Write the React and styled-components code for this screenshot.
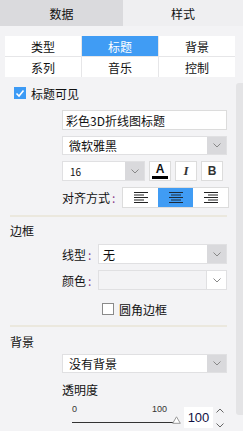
import styled, { createGlobalStyle } from "styled-components";

const GlobalStyle = createGlobalStyle`
  body {
    margin: 0;
    background: #f3f3f5;
    font-family: "Noto Sans CJK SC", "Noto Sans", sans-serif;
    font-size: 12px;
    color: #111;
  }
`;

const Panel = styled.div`
  width: 243px;
  height: 431px;
  overflow: hidden;
  display: flex;
  flex-direction: column;
`;

const MainTabs = styled.div`
  display: grid;
  grid-template-columns: 123px 120px;
  height: 26px;
`;

const MainTab = styled.div`
  display: flex;
  align-items: center;
  justify-content: center;
  background: ${(p) => (p.$active ? "#efeff1" : "#dadadd")};
`;

const Body = styled.div`
  flex: 1;
  display: flex;
`;

const Content = styled.div`
  width: 236px;
  display: flex;
  flex-direction: column;
`;

const ScrollTrack = styled.div`
  width: 7px;
  padding-top: 57px;
`;

const ScrollThumb = styled.div`
  height: 332px;
  background: #e4e4e6;
  border-radius: 3px 0 0 3px;
`;

const SubTabs = styled.div`
  margin: 10px 1px 0 5px;
  display: grid;
  grid-template-columns: repeat(3, 1fr);
  gap: 1px;
  background: #e6e6e8;
`;

const SubTab = styled.div`
  height: 20px;
  display: flex;
  align-items: center;
  justify-content: center;
  background: ${(p) => (p.$active ? "#409cf4" : "#fff")};
  color: ${(p) => (p.$active ? "#fff" : "#111")};
`;

const CheckRow = styled.label`
  display: flex;
  align-items: center;
  gap: 5px;
  height: 12px;
  margin-top: ${(p) => p.$top}px;
  padding-left: ${(p) => p.$left}px;
`;

const Box = styled.span`
  width: 12px;
  height: 12px;
  box-sizing: border-box;
  display: flex;
  align-items: center;
  justify-content: center;
  background: ${(p) => (p.$checked ? "#3d9bf5" : "#fff")};
  border: ${(p) => (p.$checked ? "none" : "1px solid #8a8a8a")};
`;

const Form = styled.div`
  padding: 0 9px 0 62px;
  display: flex;
  flex-direction: column;
`;

const TextInput = styled.div`
  margin-top: 11px;
  height: 20px;
  box-sizing: border-box;
  border: 1px solid #dcdcdc;
  background: #fff;
  padding-left: 3px;
  display: flex;
  align-items: center;
`;

const SelectBox = styled.div`
  margin-top: ${(p) => p.$top || 0}px;
  width: ${(p) => (p.$width ? p.$width + "px" : "auto")};
  flex: ${(p) => (p.$width ? "none" : "1")};
  height: ${(p) => p.$height || 20}px;
  box-sizing: border-box;
  border: 1px solid #e0e0e2;
  background: ${(p) => (p.$disabled ? "transparent" : "#fff")};
  display: flex;
`;

const SelectValue = styled.div`
  flex: 1;
  display: flex;
  align-items: center;
  padding-left: ${(p) => p.$pad || 6}px;
  font-size: ${(p) => p.$size || 12}px;
`;

const ArrowZone = styled.div`
  width: 19px;
  display: flex;
  align-items: center;
  justify-content: center;
  background: ${(p) => (p.$disabled ? "#fff" : "#d9d9dc")};
  border-left: ${(p) => (p.$disabled ? "1px solid #e0e0e2" : "none")};
`;

const Row = styled.div`
  margin-top: ${(p) => p.$top}px;
  display: flex;
  align-items: center;
`;

const StyleButton = styled.div`
  margin-left: 4px;
  width: 22px;
  height: 20px;
  box-sizing: border-box;
  border: 1px solid #dcdcdc;
  background: #fff;
  display: flex;
  flex-direction: column;
  align-items: center;
  justify-content: center;
`;

const ColorA = styled.span`
  font-family: "Liberation Sans", sans-serif;
  font-weight: bold;
  font-size: 12px;
  line-height: 10px;
`;

const ColorBar = styled.span`
  margin-top: 2px;
  width: 16px;
  height: 3px;
  background: #000;
`;

const ItalicI = styled.span`
  font-family: "Liberation Serif", serif;
  font-style: italic;
  font-weight: bold;
  font-size: 13px;
  color: #333;
`;

const BoldB = styled.span`
  font-family: "Liberation Sans", sans-serif;
  font-weight: 900;
  font-size: 12px;
  color: #333;
`;

const Label = styled.div`
  width: ${(p) => p.$width}px;
  flex: none;
`;

const Colon = styled.span`
  color: #8a3a8a;
  margin-left: 2px;
`;

const AlignGroup = styled.div`
  display: flex;
  height: 21px;
  box-sizing: border-box;
  border: 1px solid #dcdcdc;
  background: #fff;
`;

const AlignButton = styled.div`
  width: 35px;
  display: flex;
  align-items: center;
  justify-content: center;
  background: ${(p) => (p.$active ? "#409cf4" : "#fff")};
`;

const Divider = styled.div`
  margin: ${(p) => p.$top}px 9px 0 10px;
  height: 2px;
  background: #ebe8de;
`;

const Heading = styled.div`
  margin-top: ${(p) => p.$top}px;
  padding-left: 10px;
  line-height: 16px;
`;

const Caption = styled.div`
  margin-top: 9px;
  line-height: 16px;
`;

const SliderRow = styled.div`
  margin-top: 6px;
  display: flex;
  align-items: flex-start;
`;

const Slider = styled.div`
  position: relative;
  margin-left: 10px;
  width: 108px;
  height: 23px;
`;

const SliderLabels = styled.div`
  width: 95px;
  display: flex;
  justify-content: space-between;
  font-family: "Liberation Sans", sans-serif;
  font-size: 9px;
  color: #333;
  line-height: 10px;
`;

const SliderLine = styled.div`
  margin-top: 8px;
  width: 104px;
  height: 1px;
  background: #333;
`;

const SliderThumb = styled.svg`
  position: absolute;
  left: 100px;
  top: 12px;
`;

const NumberBox = styled.div`
  margin-left: 4px;
  margin-top: 3px;
  width: 29px;
  height: 21px;
  box-sizing: border-box;
  background: #fff;
  display: flex;
  align-items: center;
  justify-content: center;
  font-family: "Liberation Sans", sans-serif;
  font-size: 13px;
  color: #111144;
`;

const Spinner = styled.div`
  margin-left: 2px;
  margin-top: 4px;
  width: 10px;
  height: 20px;
  display: flex;
  flex-direction: column;
  justify-content: space-between;
  align-items: center;
`;

const Chevron = ({ up, color = "#888" }) => (
  <svg width="8" height="5" viewBox="0 0 8 5">
    <path
      d={up ? "M0.5 4.5 L4 1 L7.5 4.5" : "M0.5 0.5 L4 4 L7.5 0.5"}
      fill="none"
      stroke={color}
      strokeWidth="1"
    />
  </svg>
);

const Select = ({ value, top, width, height, size, pad, disabled }) => (
  <SelectBox $top={top} $width={width} $height={height} $disabled={disabled}>
    <SelectValue $size={size} $pad={pad}>
      {value}
    </SelectValue>
    <ArrowZone $disabled={disabled}>
      <Chevron />
    </ArrowZone>
  </SelectBox>
);

const AlignIcon = ({ mode }) => {
  const shortX = mode === "left" ? 0 : mode === "center" ? 2 : 4;
  return (
    <svg width="14" height="11" viewBox="0 0 14 11">
      {[0, 1, 2, 3, 4].map((i) => {
        const isShort = i % 2 === 1;
        return (
          <rect
            key={i}
            x={isShort ? shortX : 0}
            y={i * 2.5}
            width={isShort ? 10 : 14}
            height="1"
            fill={mode === "center" ? "#1d2b3a" : "#222"}
          />
        );
      })}
    </svg>
  );
};

const subTabs = ["类型", "标题", "背景", "系列", "音乐", "控制"];

const App = () => {
  return (
    <>
      <GlobalStyle />
      <Panel>
        <MainTabs>
          <MainTab>数据</MainTab>
          <MainTab $active>样式</MainTab>
        </MainTabs>
        <Body>
          <Content>
            <SubTabs>
              {subTabs.map((t) => (
                <SubTab key={t} $active={t === "标题"}>
                  {t}
                </SubTab>
              ))}
            </SubTabs>

            <CheckRow $top={10} $left={14}>
              <Box $checked>
                <svg width="10" height="9" viewBox="0 0 10 9">
                  <path d="M1.5 4.5 L4 7 L8.5 1.5" fill="none" stroke="#fff" strokeWidth="1.6" />
                </svg>
              </Box>
              标题可见
            </CheckRow>

            <Form>
              <TextInput>彩色3D折线图标题</TextInput>
              <Select value="微软雅黑" top={6} />
              <Row $top={6}>
                <Select value="16" width={83} size={10} pad={7} />
                <StyleButton>
                  <ColorA>A</ColorA>
                  <ColorBar />
                </StyleButton>
                <StyleButton>
                  <ItalicI>I</ItalicI>
                </StyleButton>
                <StyleButton>
                  <BoldB>B</BoldB>
                </StyleButton>
              </Row>
              <Row $top={6}>
                <Label $width={60}>
                  对齐方式<Colon>:</Colon>
                </Label>
                <AlignGroup>
                  <AlignButton>
                    <AlignIcon mode="left" />
                  </AlignButton>
                  <AlignButton $active>
                    <AlignIcon mode="center" />
                  </AlignButton>
                  <AlignButton>
                    <AlignIcon mode="right" />
                  </AlignButton>
                </AlignGroup>
              </Row>
            </Form>

            <Divider $top={7} />
            <Heading $top={6}>边框</Heading>

            <Form>
              <Row $top={5}>
                <Label $width={36}>
                  线型<Colon>:</Colon>
                </Label>
                <Select value="无" pad={4} />
              </Row>
              <Row $top={6}>
                <Label $width={36}>
                  颜色<Colon>:</Colon>
                </Label>
                <Select value="" disabled />
              </Row>
            </Form>

            <CheckRow $top={13} $left={102}>
              <Box />
              圆角边框
            </CheckRow>

            <Divider $top={10} />
            <Heading $top={7}>背景</Heading>

            <Form>
              <Select value="没有背景" top={4} />
              <Caption>透明度</Caption>
              <SliderRow>
                <Slider>
                  <SliderLabels>
                    <span>0</span>
                    <span>100</span>
                  </SliderLabels>
                  <SliderLine />
                  <SliderThumb width="9" height="8" viewBox="0 0 9 8">
                    <path d="M4.5 0.8 L8.3 7.3 L0.7 7.3 Z" fill="#fff" stroke="#999" strokeWidth="1" />
                  </SliderThumb>
                </Slider>
                <NumberBox>100</NumberBox>
                <Spinner>
                  <Chevron up color="#666" />
                  <Chevron color="#666" />
                </Spinner>
              </SliderRow>
            </Form>
          </Content>
          <ScrollTrack>
            <ScrollThumb />
          </ScrollTrack>
        </Body>
      </Panel>
    </>
  );
};

export default App;
